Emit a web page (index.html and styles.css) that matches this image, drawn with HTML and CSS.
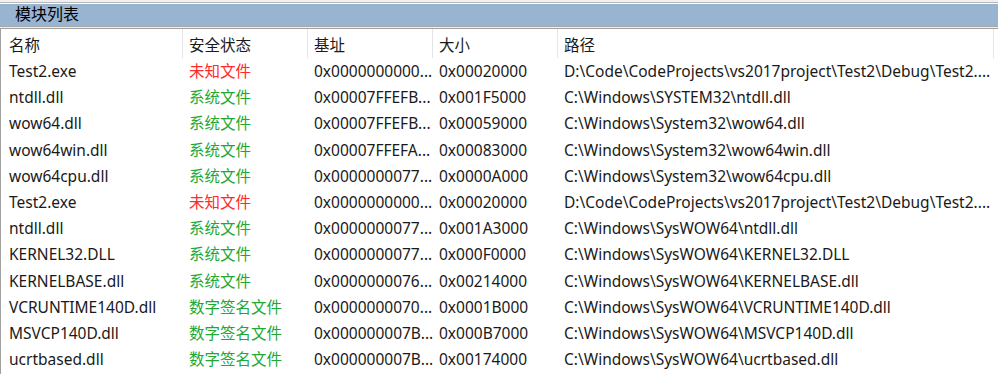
FILE: index.html
```html
<!DOCTYPE html>
<html lang="zh-CN">
<head>
    <meta charset="UTF-8">
    <title>模块列表</title>
    <link rel="stylesheet" href="styles.css">
</head>
<body>
    <div id="panel">
        <div class="title-bar">模块列表</div>
        <div class="list">
            <div class="row head">
                <div class="cell">名称</div>
                <div class="cell">安全状态</div>
                <div class="cell">基址</div>
                <div class="cell">大小</div>
                <div class="cell">路径</div>
            </div>
            <div class="row">
                <div class="cell">Test2.exe</div>
                <div class="cell unknown">未知文件</div>
                <div class="cell">0x0000000000...</div>
                <div class="cell">0x00020000</div>
                <div class="cell">D:\Code\CodeProjects\vs2017project\Test2\Debug\Test2....</div>
            </div>
            <div class="row">
                <div class="cell">ntdll.dll</div>
                <div class="cell safe">系统文件</div>
                <div class="cell">0x00007FFEFB...</div>
                <div class="cell">0x001F5000</div>
                <div class="cell">C:\Windows\SYSTEM32\ntdll.dll</div>
            </div>
            <div class="row">
                <div class="cell">wow64.dll</div>
                <div class="cell safe">系统文件</div>
                <div class="cell">0x00007FFEFB...</div>
                <div class="cell">0x00059000</div>
                <div class="cell">C:\Windows\System32\wow64.dll</div>
            </div>
            <div class="row">
                <div class="cell">wow64win.dll</div>
                <div class="cell safe">系统文件</div>
                <div class="cell">0x00007FFEFA...</div>
                <div class="cell">0x00083000</div>
                <div class="cell">C:\Windows\System32\wow64win.dll</div>
            </div>
            <div class="row">
                <div class="cell">wow64cpu.dll</div>
                <div class="cell safe">系统文件</div>
                <div class="cell">0x0000000077...</div>
                <div class="cell">0x0000A000</div>
                <div class="cell">C:\Windows\System32\wow64cpu.dll</div>
            </div>
            <div class="row">
                <div class="cell">Test2.exe</div>
                <div class="cell unknown">未知文件</div>
                <div class="cell">0x0000000000...</div>
                <div class="cell">0x00020000</div>
                <div class="cell">D:\Code\CodeProjects\vs2017project\Test2\Debug\Test2....</div>
            </div>
            <div class="row">
                <div class="cell">ntdll.dll</div>
                <div class="cell safe">系统文件</div>
                <div class="cell">0x0000000077...</div>
                <div class="cell">0x001A3000</div>
                <div class="cell">C:\Windows\SysWOW64\ntdll.dll</div>
            </div>
            <div class="row">
                <div class="cell">KERNEL32.DLL</div>
                <div class="cell safe">系统文件</div>
                <div class="cell">0x0000000077...</div>
                <div class="cell">0x000F0000</div>
                <div class="cell">C:\Windows\SysWOW64\KERNEL32.DLL</div>
            </div>
            <div class="row">
                <div class="cell">KERNELBASE.dll</div>
                <div class="cell safe">系统文件</div>
                <div class="cell">0x0000000076...</div>
                <div class="cell">0x00214000</div>
                <div class="cell">C:\Windows\SysWOW64\KERNELBASE.dll</div>
            </div>
            <div class="row">
                <div class="cell">VCRUNTIME140D.dll</div>
                <div class="cell safe">数字签名文件</div>
                <div class="cell">0x0000000070...</div>
                <div class="cell">0x0001B000</div>
                <div class="cell">C:\Windows\SysWOW64\VCRUNTIME140D.dll</div>
            </div>
            <div class="row">
                <div class="cell">MSVCP140D.dll</div>
                <div class="cell safe">数字签名文件</div>
                <div class="cell">0x000000007B...</div>
                <div class="cell">0x000B7000</div>
                <div class="cell">C:\Windows\SysWOW64\MSVCP140D.dll</div>
            </div>
            <div class="row">
                <div class="cell">ucrtbased.dll</div>
                <div class="cell safe">数字签名文件</div>
                <div class="cell">0x000000007B...</div>
                <div class="cell">0x00174000</div>
                <div class="cell">C:\Windows\SysWOW64\ucrtbased.dll</div>
            </div>
        </div>
    </div>
</body>
</html>
```

FILE: styles.css
```css
body {
    margin: 0;
    background-color: #ffffff;
    font-family: "Noto Sans", "Noto Sans CJK SC", sans-serif;
    font-size: 15.5px;
    color: #1a1a1a;
}
#panel {
    width: 998px;
    height: 374px;
    overflow: hidden;
    background-color: #f0f0f0;
    padding-top: 2px;
    box-sizing: border-box;
}
.title-bar {
    height: 23px;
    line-height: 23px;
    padding-left: 15px;
    background-color: #99b4d1;
    border-top: 1px solid #b8b8b8;
    border-bottom: 1px solid #a8a8a8;
    box-shadow: inset 0 1px 0 #ffffff;
    color: #000000;
    font-size: 16px;
}
.list {
    margin-top: 1px;
    height: 400px;
    background-color: #ffffff;
    border-left: 1px solid #a0a0a0;
    border-top: 1px solid #a0a0a0;
}
.row {
    display: grid;
    grid-template-columns: 182px 125px 125px 125px 436px;
    height: 26.2px;
    line-height: 26px;
}
.row.head {
    height: 29px;
}
.cell {
    padding-left: 6px;
    white-space: nowrap;
    overflow: hidden;
}
.cell:first-child {
    padding-left: 8px;
}
.head .cell {
    padding-top: 3px;
    border-right: 1px solid #e5e5e5;
}
.unknown {
    color: #ff2a2a;
}
.safe {
    color: #22a832;
}
```
